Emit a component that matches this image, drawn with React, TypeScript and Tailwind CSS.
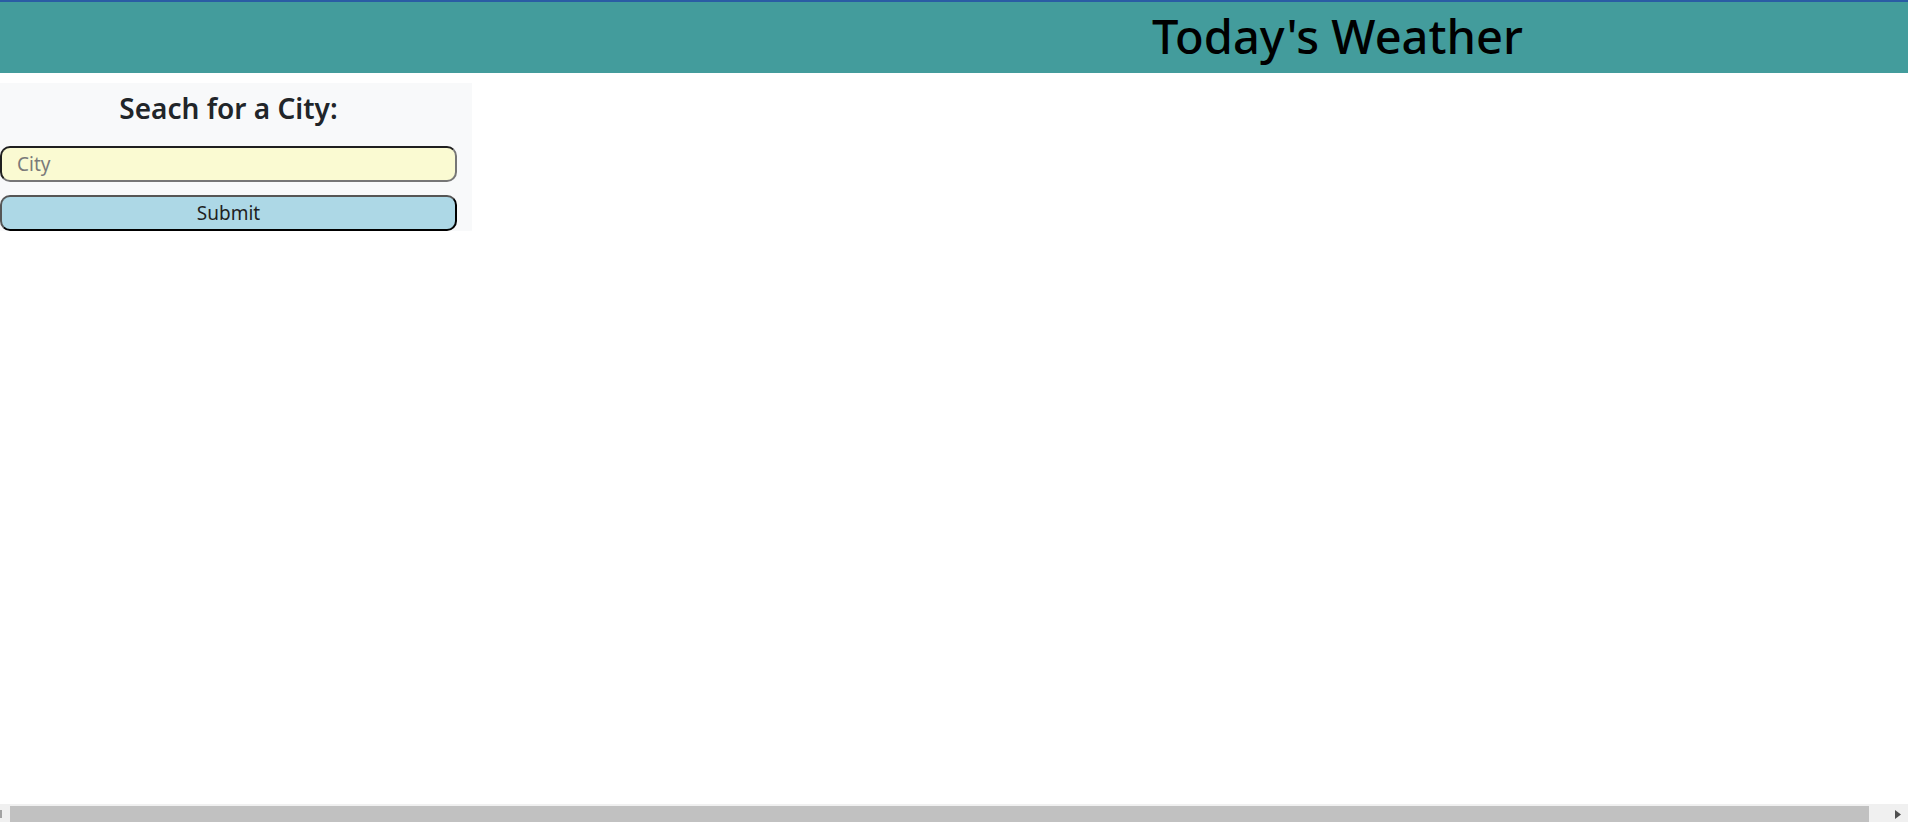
import React, { useState } from "react";

export default function App() {
  const [city, setCity] = useState("");

  return (
    <div className="h-screen flex flex-col bg-white overflow-hidden font-['Noto_Sans',sans-serif] text-[#212529]">
      {/* header */}
      <header className="h-[73px] shrink-0 border-t-2 border-[#2a5ca4] bg-[#439c9c] flex items-center pl-[1152px]">
        <h1 className="text-[47px] font-medium leading-none text-black whitespace-nowrap pb-[2px]">
          Today's Weather
        </h1>
      </header>

      <main className="flex-1 pt-[10px]">
        <section className="w-[472px] bg-[#f8f9fa] flex flex-col">
          <h3 className="w-[457px] text-center text-[28px] font-semibold leading-[34px] pt-[8px] pb-[21px]">
            Seach for a City:
          </h3>
          <input
            value={city}
            onChange={(e) => setCity(e.target.value)}
            placeholder="City"
            className="w-[457px] h-[36px] rounded-[10px] border-2 border-t-[#1f1f1f] border-l-[#1f1f1f] border-r-[#767676] border-b-[#767676] bg-[#fafad2] px-[15px] text-[19px] placeholder:text-[#7a7a7a] outline-none"
          />
          <button className="mt-[13px] w-[457px] h-[36px] rounded-[10px] border-2 border-t-[#555] border-l-[#555] border-r-black border-b-black bg-[#add8e6] text-[19px] text-[#1f1f1f] leading-none">
            Submit
          </button>
        </section>
      </main>

      {/* horizontal scrollbar */}
      <div className="h-[18px] shrink-0 bg-[#f0f0f0] flex items-end">
        <div className="w-[10px] h-[16px] flex items-center">
          <div className="w-[2px] h-[8px] bg-[#a3a3a3]" />
        </div>
        <div className="w-[1859px] h-[16px] bg-[#c1c1c1]" />
        <div className="flex-1 h-[16px] flex items-center justify-end pr-[7px]">
          <svg width="6" height="9" viewBox="0 0 6 9">
            <path d="M0 0 L6 4.5 L0 9 Z" fill="#505050" />
          </svg>
        </div>
      </div>
    </div>
  );
}
